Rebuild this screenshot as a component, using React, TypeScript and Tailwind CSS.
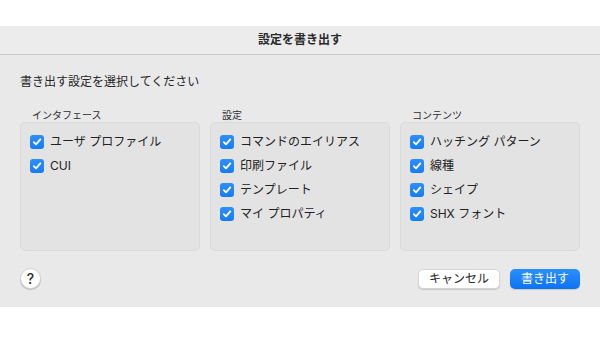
import React from "react";

type Group = { label: string; items: string[] };

const groups: Group[] = [
  { label: "インタフェース", items: ["ユーザ プロファイル", "CUI"] },
  { label: "設定", items: ["コマンドのエイリアス", "印刷ファイル", "テンプレート", "マイ プロパティ"] },
  { label: "コンテンツ", items: ["ハッチング パターン", "線種", "シェイプ", "SHX フォント"] },
];

const font = { fontFamily: '"Inter", "Noto Sans CJK JP", sans-serif' };

function CheckBox() {
  return (
    <span className="flex h-[14px] w-[14px] shrink-0 items-center justify-center rounded-[3px] bg-gradient-to-b from-[#2e8ffc] to-[#157cf6]">
      <svg width="10" height="10" viewBox="0 0 10 10" fill="none">
        <path d="M1.8 5.2 L4 7.4 L8.3 2.4" stroke="white" strokeWidth="1.8" strokeLinecap="round" strokeLinejoin="round" />
      </svg>
    </span>
  );
}

export default function App() {
  return (
    <div className="h-[338px] w-[600px] bg-white pt-[26px]" style={font}>
      <div className="flex h-[281px] flex-col bg-[#e9e9e9]">
        <div className="flex h-[29px] items-center justify-center border-b border-[#c9c9c9] bg-[#ececec] text-[12px] font-bold text-[#2a2a2a]">
          設定を書き出す
        </div>

        <div className="px-5 pt-[19px]">
          <p className="text-[12px] leading-[16px] text-[#262626]">書き出す設定を選択してください</p>

          <div className="mt-[18px] grid grid-cols-3 gap-[10px]">
            {groups.map((group) => (
              <div key={group.label}>
                <p className="pl-3 text-[10px] leading-[14px] text-[#2e2e2e]">{group.label}</p>
                <div className="h-[129px] rounded-[5px] border border-[#dadada] bg-[#e3e3e3] px-[9px] pt-[7px]">
                  {group.items.map((item) => (
                    <div className="flex h-6 items-center gap-[6px] text-[12px] text-[#222]" key={item}>
                      <CheckBox />
                      <span>{item}</span>
                    </div>
                  ))}
                </div>
              </div>
            ))}
          </div>

          <div className="mt-[17px] flex items-center">
            <button className="flex h-[21px] w-[21px] items-center justify-center rounded-full border border-[#d0d0d0] bg-white text-[14px] font-medium leading-none text-[#2a2a2a] shadow-[0_1px_1px_rgba(0,0,0,0.2)]">
              ?
            </button>
            <div className="ml-auto flex gap-[10px]">
              <button className="h-5 w-[82px] rounded-[5px] border border-[#d6d6d6] bg-white text-[12px] leading-none text-[#262626] shadow-[0_1px_1px_rgba(0,0,0,0.15)]">
                キャンセル
              </button>
              <button className="h-5 w-[70px] rounded-[5px] bg-gradient-to-b from-[#2a8ffd] to-[#0a73f5] text-[12px] leading-none text-white shadow-[0_1px_1px_rgba(0,0,0,0.15)]">
                書き出す
              </button>
            </div>
          </div>
        </div>
      </div>
    </div>
  );
}
